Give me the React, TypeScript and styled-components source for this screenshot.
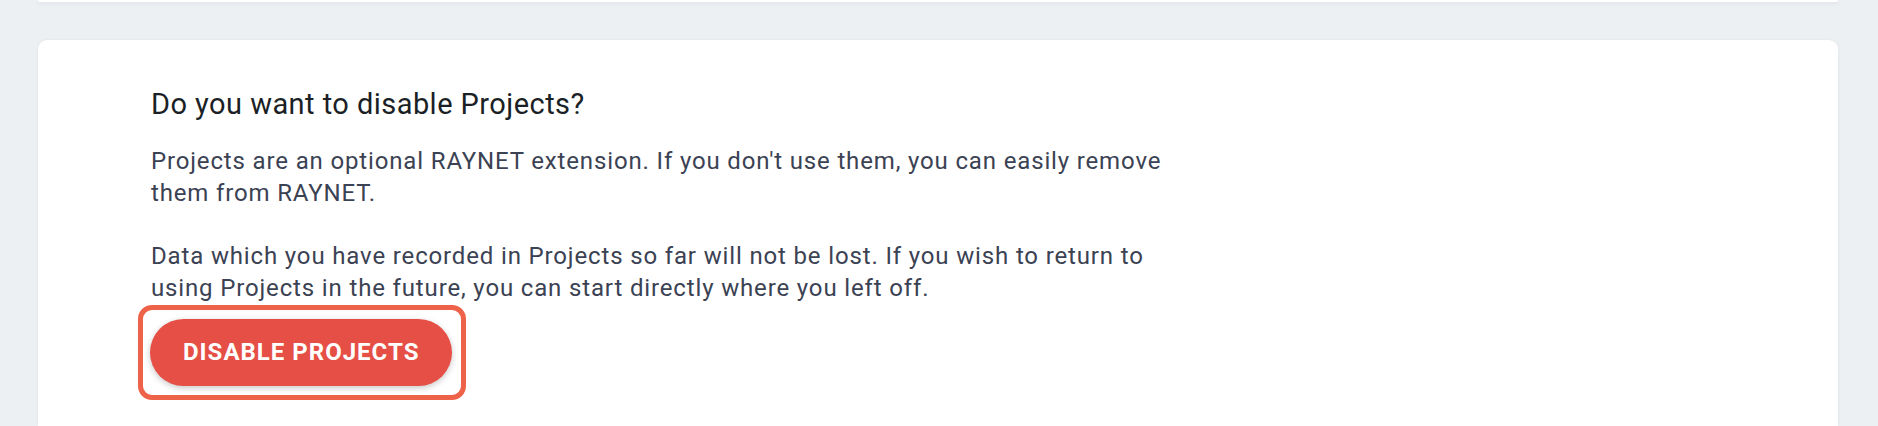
import React from "react";
import styled, { createGlobalStyle } from "styled-components";

const Global = createGlobalStyle`
  html, body {
    margin: 0;
    padding: 0;
    background: #edf0f3;
    font-family: Roboto, "Liberation Sans", Arial, sans-serif;
  }
  * { box-sizing: border-box; }
`;

const Page = styled.div`
  width: 1878px;
  height: 426px;
  overflow: hidden;
  background: #edf0f3;
  padding: 0 40px 0 38px;
  display: flex;
  flex-direction: column;
  gap: 38px;
`;

const PrevCard = styled.div`
  height: 2px;
  background: #ffffff;
  border-radius: 0 0 8px 8px;
  box-shadow: 0 1px 4px rgba(30, 40, 60, 0.12);
`;

const Card = styled.section`
  flex: 1;
  background: #ffffff;
  border-radius: 9px 9px 0 0;
  box-shadow: 0 0 3px rgba(30, 40, 60, 0.08);
  padding: 46px 0 0 113px;
  display: flex;
  flex-direction: column;
  align-items: flex-start;
`;

const Title = styled.h2`
  margin: 0 0 24px;
  font-size: 29px;
  line-height: 36px;
  font-weight: 400;
  letter-spacing: 0.45px;
  color: #1b1f26;
`;

const Text = styled.p`
  margin: 0 0 32px;
  max-width: 1040px;
  font-size: 24px;
  line-height: 31.7px;
  letter-spacing: 0.85px;
  color: #3b4253;
  &:last-of-type { margin-bottom: 0; }
`;

const FocusRing = styled.div`
  margin-left: -13px;
  border: 5px solid #ee6249;
  border-radius: 14px;
  padding: 9px 9px 9px 7px;
  display: inline-flex;
`;

const DangerButton = styled.button`
  height: 67px;
  padding: 0 33px;
  border: none;
  border-radius: 34px;
  background: #e64f45;
  color: #ffffff;
  font-family: Roboto, "Liberation Sans", Arial, sans-serif;
  font-size: 24px;
  font-weight: 700;
  letter-spacing: 1px;
  text-transform: uppercase;
  box-shadow: 0 2px 6px rgba(0, 0, 0, 0.22);
  cursor: pointer;
`;

export default function App() {
  return (
    <>
      <Global />
      <Page>
        <PrevCard />
        <Card>
          <Title>Do you want to disable Projects?</Title>
          <Text>
            Projects are an optional RAYNET extension. If you don't use them, you can easily remove them from RAYNET.
          </Text>
          <Text>
            Data which you have recorded in Projects so far will not be lost. If you wish to return to using Projects in the future, you can start directly where you left off.
          </Text>
          <FocusRing>
            <DangerButton>Disable Projects</DangerButton>
          </FocusRing>
        </Card>
      </Page>
    </>
  );
}
